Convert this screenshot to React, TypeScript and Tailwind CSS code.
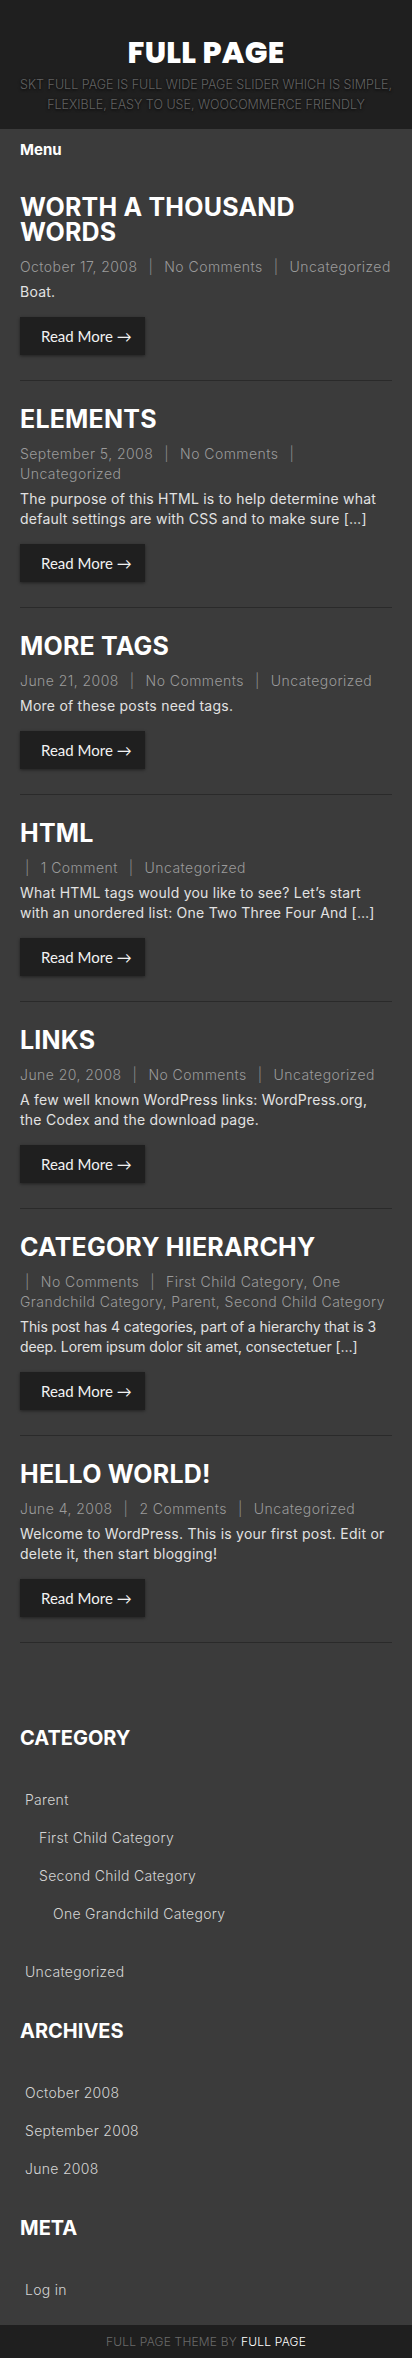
import React from 'react';

type Post = {
  title: string;
  date?: string;
  comments: string;
  cats: string;
  excerpt: string;
  tight?: boolean;
};

const posts: Post[] = [
  { title: 'Worth A Thousand Words', date: 'October 17, 2008', comments: 'No Comments', cats: 'Uncategorized', excerpt: 'Boat.' },
  { title: 'Elements', date: 'September 5, 2008', comments: 'No Comments', cats: 'Uncategorized', excerpt: 'The purpose of this HTML is to help determine what default settings are with CSS and to make sure […]' },
  { title: 'More Tags', date: 'June 21, 2008', comments: 'No Comments', cats: 'Uncategorized', excerpt: 'More of these posts need tags.' },
  { title: 'HTML', comments: '1 Comment', cats: 'Uncategorized', excerpt: 'What HTML tags would you like to see? Let’s start with an unordered list: One Two Three Four And […]' },
  { title: 'Links', date: 'June 20, 2008', comments: 'No Comments', cats: 'Uncategorized', excerpt: 'A few well known WordPress links: WordPress.org, the Codex and the download page.' },
  { title: 'Category Hierarchy', comments: 'No Comments', cats: 'First Child Category, One Grandchild Category, Parent, Second Child Category', excerpt: 'This post has 4 categories, part of a hierarchy that is 3 deep. Lorem ipsum dolor sit amet, consectetuer […]', tight: true },
  { title: 'Hello world!', date: 'June 4, 2008', comments: '2 Comments', cats: 'Uncategorized', excerpt: 'Welcome to WordPress. This is your first post. Edit or delete it, then start blogging!' },
];

const head = "font-['Inter',sans-serif]";

const Sep: React.FC<{ first?: boolean }> = ({ first }) => (
  <>
    <span className={`${first ? 'ml-[5px] mr-[11px]' : 'mx-[11px]'} text-[#8a8a8a]`}>|</span>
    <wbr />
  </>
);

const PostItem: React.FC<{ post: Post }> = ({ post }) => (
  <article className="pt-[26px] pb-[25px] border-b border-[#2a2a2a]">
    <h2 className={`${head} text-[25px] leading-[25px] font-bold uppercase text-white tracking-[0.2px]`}>
      {post.title}
    </h2>
    <div className={`${head} mt-[12px] text-[14px] leading-[20px] font-light text-[#9a9a9a] tracking-[0.45px]`}>
      {post.date ? <span className="whitespace-nowrap">{post.date}</span> : null}
      <Sep first={!post.date} />
      <span className="whitespace-nowrap">{post.comments}</span>
      <Sep />
      <span>{post.cats}</span>
    </div>
    <p
      className={`${head} mt-[5px] text-[14px] leading-[20px] text-[#e2e2e2] ${
        post.tight ? 'tracking-[-0.1px]' : 'tracking-[0.24px]'
      }`}
    >
      {post.excerpt}
    </p>
    <a className="mt-[15px] flex items-center w-[125px] h-[38px] pl-[21px] bg-[#1f1f1f] shadow-[0_1px_3px_rgba(0,0,0,0.45)] font-['Lato',sans-serif] text-[15px] leading-[20px] text-[#f2f2f2]">
      Read More →
    </a>
  </article>
);

const Li: React.FC<{ indent?: number; children: React.ReactNode }> = ({ indent = 0, children }) => {
  const pad = indent === 0 ? 'pl-[5px]' : indent === 1 ? 'pl-[19px]' : 'pl-[33px]';
  return (
    <li className={`${pad} h-[38px] flex items-center text-[14px] font-light text-[#d4d4d4] tracking-[0.3px]`}>
      {children}
    </li>
  );
};

const Widget: React.FC<{ title: string; first?: boolean; children: React.ReactNode }> = ({ title, first, children }) => (
  <section className={first ? '' : 'mt-[29px]'}>
    <h3 className={`${head} text-[20px] leading-[24px] font-bold uppercase text-white mb-[30px]`}>{title}</h3>
    <ul className={head}>{children}</ul>
  </section>
);

export default function App() {
  return (
    <div className="w-[412px] min-h-[2358px] bg-[#3b3b3b] flex flex-col">
      {/* Header */}
      <header className="bg-[#1f1f1f] pt-[36px] pb-[14px] text-center">
        <h1 className="font-['Poppins','Inter',sans-serif] text-[30px] leading-[34px] font-extrabold text-white tracking-[0.3px]">
          FULL PAGE
        </h1>
        <p className={`${head} mt-[5px] px-[16px] text-[12.5px] leading-[20px] font-light uppercase text-[#626262] [text-shadow:0_1px_3px_#000]`}>
          SKT Full Page is full wide page slider which is simple, flexible, easy to use, woocommerce friendly
        </p>
      </header>

      {/* Menu */}
      <nav className="px-[20px] pt-[11px] pb-[9px]">
        <div className={`${head} text-[15px] leading-[20px] font-bold text-white`}>Menu</div>
      </nav>

      {/* Posts */}
      <main className="px-[20px]">
        {posts.map(p => (
          <PostItem key={p.title} post={p} />
        ))}
      </main>

      {/* Sidebar */}
      <aside className="px-[20px] pt-[83px] pb-[17px]">
        <Widget title="Category" first>
          <Li>Parent</Li>
          <div className="mb-[20px]">
            <Li indent={1}>First Child Category</Li>
            <Li indent={1}>Second Child Category</Li>
            <Li indent={2}>One Grandchild Category</Li>
          </div>
          <Li>Uncategorized</Li>
        </Widget>
        <Widget title="Archives">
          <Li>October 2008</Li>
          <Li>September 2008</Li>
          <Li>June 2008</Li>
        </Widget>
        <Widget title="Meta">
          <Li>Log in</Li>
        </Widget>
      </aside>

      {/* Footer */}
      <footer className={`${head} mt-auto h-[34px] bg-[#1f1f1f] flex items-center justify-center text-[12px] font-light uppercase tracking-[0.2px]`}>
        <span className="text-[#6a6a6a]">Full Page Theme By</span>
        <span className="ml-[4px] text-white">Full Page</span>
      </footer>
    </div>
  );
}
